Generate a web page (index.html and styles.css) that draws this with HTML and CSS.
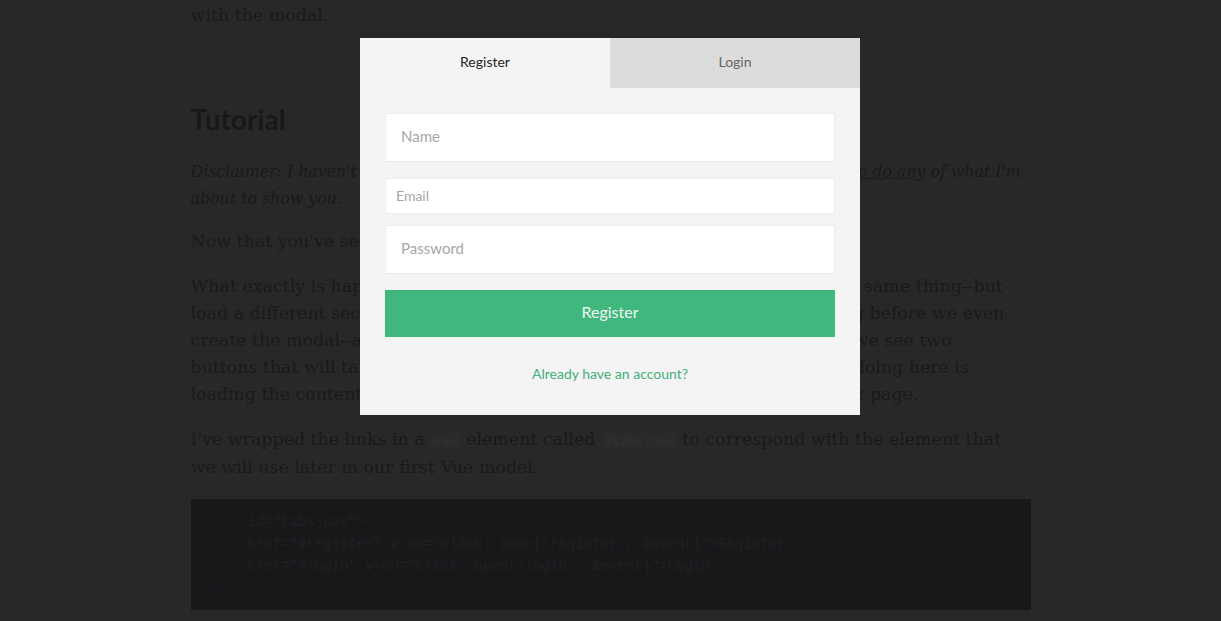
FILE: index.html
```html
<!DOCTYPE html>
<html lang="en">
<head>
<meta charset="utf-8">
<title>Vue modal tutorial</title>
<link rel="stylesheet" href="styles.css">
</head>
<body>
<article class="post">
  <p class="first">Go ahead and click on either of the buttons above to see what happens when we interact<br>with the modal.</p>
  <h2 class="heading">Tutorial</h2>
  <p class="disclaimer">Disclaimer: I haven't been using Vue.js for very long, so I'm not sure the best way <a href="#">to do any</a> of what I'm<br>about to show you.</p>
  <p>Now that you've seen the demo, let's take a look at how it was built.</p>
  <p>What exactly is happening here? Both of the buttons essentially do the very same thing--but<br>load a different section of the same modal when they are each clicked. Long before we even<br>create the modal--and before we even write a single line of the JavaScript--we see two<br>buttons that will take us to the register and login forms. What we're really doing here is<br>loading the content dynamically with Vue instead of linking to a whole other page.</p>
  <p>I've wrapped the links in a <code class="inline">nav</code> element called <code class="inline">#tabs-nav</code> to correspond with the element that<br>we will use later in our first Vue model.</p>
  <pre class="code"><span class="tag">&lt;nav</span> <span class="attr">id="tabs-nav"&gt;</span>
  <span class="tag">&lt;a</span> <span class="attr">href="#register" v-on="click: open('register', $event)"&gt;Register</span><span class="tag">&lt;/a&gt;</span>
  <span class="tag">&lt;a</span> <span class="attr">href="#login" v-on="click: open('login', $event)"&gt;Login</span><span class="tag">&lt;/a&gt;</span>
<span class="tag">&lt;/nav&gt;</span></pre>
</article>

<div class="modal">
  <nav class="tabs">
    <a class="tab active" href="#register">Register</a>
    <a class="tab" href="#login">Login</a>
  </nav>
  <form class="form">
    <input class="field" type="text" placeholder="Name">
    <input class="field small" type="email" placeholder="Email">
    <input class="field" type="password" placeholder="Password">
    <button class="submit" type="button">Register</button>
    <a class="switch" href="#login">Already have an account?</a>
  </form>
</div>
</body>
</html>
```
FILE: styles.css
```css
html, body {
  margin: 0;
  padding: 0;
  background: #282828;
  height: 100%;
  overflow: hidden;
}

.post {
  width: 840px;
  margin: -25px auto 0;
  font-family: "DejaVu Serif", "Liberation Serif", serif;
  font-size: 17.4px;
  line-height: 27px;
  color: #1a1a1a;
}

.post p {
  margin: 0 0 18px;
  white-space: nowrap;
}

.post .first {
  margin-bottom: 73px;
}

.heading {
  font-family: Lato, "Liberation Sans", sans-serif;
  font-weight: 700;
  font-size: 28px;
  line-height: 34px;
  margin: 0 0 22px;
  color: #181818;
}

.post .disclaimer {
  font-style: italic;
  font-size: 15.8px;
  margin-bottom: 16px;
}

.disclaimer a {
  color: #1a1a1a;
  text-decoration: underline;
}

.inline {
  font-family: "DejaVu Sans Mono", monospace;
  font-size: 12.5px;
  background: #2a2a2a;
  color: #323232;
  padding: 2px 4px;
}

.code {
  margin: 17px 0 0;
  background: #18181a;
  padding: 12px 15px 11px;
  font-family: "Liberation Mono", monospace;
  font-size: 14px;
  line-height: 22px;
  color: #1f1f21;
  white-space: pre;
  overflow: hidden;
}

.code .tag { color: #1b1b1d; }
.code .attr { color: #202022; }

.modal {
  position: fixed;
  top: 38px;
  left: 360px;
  width: 500px;
  background: #f4f4f4;
  font-family: Lato, "Liberation Sans", sans-serif;
}

.tabs {
  display: flex;
}

.tab {
  flex: 1;
  box-sizing: border-box;
  height: 50px;
  padding-bottom: 3px;
  display: flex;
  align-items: center;
  justify-content: center;
  font-size: 14px;
  color: #666;
  background: #dcdcdc;
  text-decoration: none;
}

.tab.active {
  background: #f4f4f4;
  color: #1e1e1e;
}

.form {
  display: flex;
  flex-direction: column;
  padding: 25px 25px 32px;
}

.field {
  box-sizing: border-box;
  height: 49px;
  border: 1px solid #ececec;
  background: #fff;
  padding: 0 15px 3px;
  font-family: Lato, "Liberation Sans", sans-serif;
  font-size: 15px;
  color: #333;
  margin: 0 0 16px;
  outline: none;
}

.field.small {
  height: 36px;
  padding: 0 10px 2px;
  font-size: 14px;
  margin-bottom: 11px;
}

.field::placeholder {
  color: #a6a6a6;
}

.submit {
  height: 47px;
  border: 0;
  background: #40b77c;
  color: #eef8f2;
  font-family: Lato, "Liberation Sans", sans-serif;
  font-size: 16px;
  padding: 0 0 4px;
  margin: 0;
  cursor: pointer;
}

.switch {
  margin-top: 28px;
  text-align: center;
  font-size: 14px;
  line-height: 18px;
  color: #43ae7b;
  text-decoration: none;
}
```
